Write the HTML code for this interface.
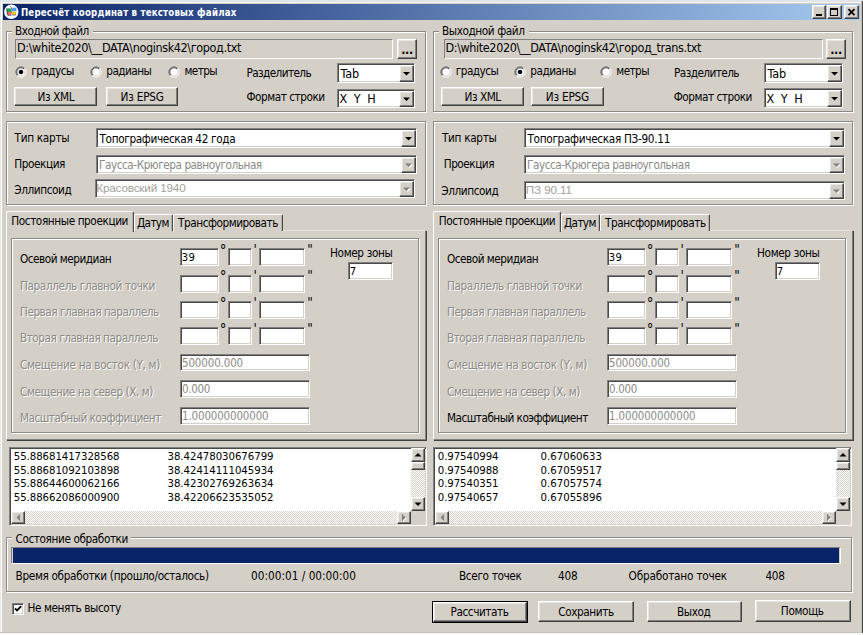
<!DOCTYPE html>
<html lang="ru"><head><meta charset="utf-8"><title>Пересчёт координат в текстовых файлах</title>
<style>
html,body{margin:0;padding:0}
body{width:863px;height:635px;background:#d4d0c8;position:relative;overflow:hidden;font-family:"DejaVu Sans Condensed","Liberation Sans",sans-serif;font-size:11.7px;color:#000}
.a,.t,.grp,.ed,.ed1,.btn,.page,.tab,.trk,svg.a{position:absolute;box-sizing:border-box}
.t{white-space:pre;display:block}
.lib{font-family:"Liberation Sans",sans-serif}
.grp{box-sizing:content-box;border:1px solid #8c8a85;box-shadow:1px 1px 0 #fff, inset 1px 1px 0 #fff}
.ed{border:1px solid;border-color:#808080 #fff #fff #808080;box-shadow:inset 1px 1px 0 #4a4a4a, inset -1px -1px 0 #d4d0c8}
.ed1{border:1px solid;border-color:#808080 #fff #fff #808080;background-clip:content-box !important;padding:1px}
.btn{background:#d4d0c8;border:1px solid;border-color:#fff #404040 #404040 #fff;box-shadow:inset -1px -1px 0 #808080, inset 1px 1px 0 #e8e6e0}
.page{box-sizing:content-box;border:1px solid;border-color:#e6e4de #808080 #808080 #fff;box-shadow:1px 1px 0 #404040;background:#d4d0c8}
.tab{box-sizing:content-box;background:#d4d0c8;border:1px solid;border-color:#fff #4a4a4a transparent #fff;border-bottom:none;border-radius:2px 2px 0 0;box-shadow:inset -1px 0 0 #b4b1aa}
.tab.sel{}
.trk{background:#e9e7e3 repeating-conic-gradient(#ffffff 0% 25%, #d4d0c8 0% 50%) 0 0/2px 2px}
</style></head>
<body>
<div class="a" style="left:0;top:0;width:863px;height:1px;background:#dde6f1"></div>
<div class="a" style="left:0;top:1px;width:2px;height:634px;background:#e9e7e2"></div>
<div class="a" style="left:0;top:1px;width:863px;height:1px;background:#e4e2dc"></div>
<div class="a" style="left:1px;top:2px;width:860px;height:1px;background:#f6f5f2"></div>
<div class="a" style="left:1px;top:2px;width:1px;height:630px;background:#fff"></div>
<div class="a" style="left:0;top:633px;width:863px;height:2px;background:#f3f6fb"></div>
<div class="a" style="left:0;top:632px;width:863px;height:1px;background:#c6c2bb"></div>
<div class="a" style="left:861px;top:1px;width:1px;height:632px;background:#c4c1ba"></div>
<div class="a" style="left:862px;top:1px;width:1px;height:632px;background:#45433f"></div>
<div class="a" style="left:3px;top:4px;width:857px;height:16px;background:linear-gradient(90deg,#0a246a 0%,#a6caf0 100%)"></div>
<svg class="a" style="left:4px;top:4px" width="16" height="16" viewBox="0 0 16 16"><circle cx="7.3" cy="7.8" r="7.2" fill="#fff"/><path d="M2.7 4.6 Q5 3.9 7.7 4.7 L7.7 8.1 Q5 7.6 2.9 8.3 Z" fill="#21a355"/><path d="M8 4.6 Q9.4 3 10.6 3.6 Q11.6 3.4 12.4 4.6 L12.5 7.3 Q10.3 6.9 8 7.5 Z" fill="#4d9cf5"/><path d="M2.9 8.3 Q5 7.6 7.7 8.1 L7.7 10.6 Q5.4 10.6 3.6 11.2 Z" fill="#f0605e"/><path d="M8 7.8 Q10.3 7.2 12.4 7.6 L12 10.4 Q10 10.7 8 10.3 Z" fill="#fbc312"/><path d="M6.2 2.2 Q7.6 3.4 7.8 5 M2.6 4.4 L3 8 L3.8 11.4 M4 11.6 Q5.6 11.2 7.6 11.2 M8 10.8 Q10 11.2 12 10.8" fill="none" stroke="#2a2a2a" stroke-width="0.8" opacity="0.85"/></svg>
<span id="t1" class="t" style="left:20.90px;top:7px;font-size:9.6px;line-height:11px;color:#fff;font-weight:bold;letter-spacing:0.207px;">Пересчёт координат в текстовых файлах</span>
<div class="btn" style="left:812px;top:5px;width:14px;height:14px;"></div>
<div class="btn" style="left:827px;top:5px;width:15px;height:14px;"></div>
<div class="btn" style="left:844px;top:5px;width:15px;height:14px;"></div>
<svg class="a" style="left:0;top:0" width="863" height="635"><rect x="816" y="14" width="6" height="2" fill="#000"/><rect x="830.5" y="8.5" width="7" height="7" fill="none" stroke="#000" stroke-width="1"/><rect x="830" y="8" width="8" height="2" fill="#000"/><path d="M848.5 9.2 L854.5 15.2 M854.5 9.2 L848.5 15.2" stroke="#000" stroke-width="1.7" fill="none"/></svg>
<div class="grp" style="left:6px;top:31px;width:418px;height:79px"></div>
<div class="a" style="left:12px;top:26px;width:80.75px;height:10px;background:#d4d0c8"></div>
<span id="t2" class="t" style="left:15.00px;top:24px;font-size:11.7px;line-height:14px;letter-spacing:-0.488px;">Входной файл</span>
<div class="ed1" style="left:15px;top:39px;width:378px;height:20px;"></div>
<span id="t3" class="t" style="left:17.00px;top:40px;font-size:12.5px;line-height:15px;letter-spacing:-0.377px;">D:\white2020\__DATA\noginsk42\город.txt</span>
<div class="btn" style="left:397px;top:39px;width:20px;height:20px;"></div>
<span id="t4" class="t" style="left:401.20px;top:42px;font-size:12.5px;line-height:15px;font-weight:bold;letter-spacing:-0.343px;">...</span>
<svg class="a" style="left:15px;top:65.8px" width="12" height="12"><circle cx="6" cy="6" r="4.6" fill="#fff"/><path d="M2.3 9.7 A5.2 5.2 0 0 1 9.7 2.3" fill="none" stroke="#808080" stroke-width="1"/><path d="M3 9 A4.2 4.2 0 0 1 9 3" fill="none" stroke="#404040" stroke-width="1"/><path d="M9.7 2.3 A5.2 5.2 0 0 1 2.3 9.7" fill="none" stroke="#fff" stroke-width="1"/><path d="M9 3 A4.2 4.2 0 0 1 3 9" fill="none" stroke="#d4d0c8" stroke-width="1"/><circle cx="6" cy="6" r="2.3" fill="#000"/></svg>
<span id="t5" class="t" style="left:31.25px;top:64px;font-size:11.7px;line-height:14px;letter-spacing:-0.533px;">градусы</span>
<svg class="a" style="left:89.75px;top:65.8px" width="12" height="12"><circle cx="6" cy="6" r="4.6" fill="#fff"/><path d="M2.3 9.7 A5.2 5.2 0 0 1 9.7 2.3" fill="none" stroke="#808080" stroke-width="1"/><path d="M3 9 A4.2 4.2 0 0 1 9 3" fill="none" stroke="#404040" stroke-width="1"/><path d="M9.7 2.3 A5.2 5.2 0 0 1 2.3 9.7" fill="none" stroke="#fff" stroke-width="1"/><path d="M9 3 A4.2 4.2 0 0 1 3 9" fill="none" stroke="#d4d0c8" stroke-width="1"/></svg>
<span id="t6" class="t" style="left:106.25px;top:64px;font-size:11.7px;line-height:14px;letter-spacing:-0.551px;">радианы</span>
<svg class="a" style="left:168.25px;top:65.8px" width="12" height="12"><circle cx="6" cy="6" r="4.6" fill="#fff"/><path d="M2.3 9.7 A5.2 5.2 0 0 1 9.7 2.3" fill="none" stroke="#808080" stroke-width="1"/><path d="M3 9 A4.2 4.2 0 0 1 9 3" fill="none" stroke="#404040" stroke-width="1"/><path d="M9.7 2.3 A5.2 5.2 0 0 1 2.3 9.7" fill="none" stroke="#fff" stroke-width="1"/><path d="M9 3 A4.2 4.2 0 0 1 3 9" fill="none" stroke="#d4d0c8" stroke-width="1"/></svg>
<span id="t7" class="t" style="left:184.50px;top:64px;font-size:11.7px;line-height:14px;letter-spacing:-0.603px;">метры</span>
<span id="t8" class="t" style="left:246.50px;top:66px;font-size:11.7px;line-height:14px;letter-spacing:-0.608px;">Разделитель</span>
<div class="ed" style="left:337px;top:63px;width:78px;height:20px;background:#fff;"></div>
<div class="btn" style="left:399px;top:65px;width:15px;height:17px;"></div>
<svg class="a" style="left:0;top:0" width="863" height="635"><polygon points="403.0,72.0 410.0,72.0 406.5,75.5" fill="#000"/></svg>
<span id="t9" class="t" style="left:340.50px;top:66px;font-size:12.5px;line-height:15px;letter-spacing:-0.115px;">Tab</span>
<div class="btn" style="left:14px;top:87px;width:83px;height:19px;"></div>
<span id="t10" class="t" style="left:37.50px;top:90px;font-size:11.7px;line-height:14px;letter-spacing:-0.365px;">Из XML</span>
<div class="btn" style="left:106px;top:87px;width:72px;height:19px;"></div>
<span id="t11" class="t" style="left:120.50px;top:90px;font-size:11.7px;line-height:14px;letter-spacing:-0.194px;">Из EPSG</span>
<span id="t12" class="t" style="left:246.50px;top:90px;font-size:11.7px;line-height:14px;letter-spacing:-0.458px;">Формат строки</span>
<div class="ed" style="left:337px;top:89px;width:78px;height:19px;background:#fff;"></div>
<div class="btn" style="left:399px;top:91px;width:15px;height:16px;"></div>
<svg class="a" style="left:0;top:0" width="863" height="635"><polygon points="403.0,97.5 410.0,97.5 406.5,101.0" fill="#000"/></svg>
<span id="t13" class="t" style="left:339.50px;top:91px;font-size:12.5px;line-height:15px;letter-spacing:-0.188px;">X  Y  H</span>
<div class="grp" style="left:6px;top:121px;width:418px;height:82px"></div>
<span id="t14" class="t" style="left:14.50px;top:131px;font-size:11.7px;line-height:14px;letter-spacing:-0.292px;">Тип карты</span>
<div class="ed" style="left:96px;top:128px;width:321px;height:20px;background:#fff;"></div>
<div class="btn" style="left:401px;top:130px;width:15px;height:17px;"></div>
<svg class="a" style="left:0;top:0" width="863" height="635"><polygon points="405.0,137.0 412.0,137.0 408.5,140.5" fill="#000"/></svg>
<span id="t15" class="t" style="left:99.50px;top:132px;font-size:11.7px;line-height:14px;letter-spacing:-0.356px;">Топографическая 42 года</span>
<span id="t16" class="t" style="left:14.25px;top:157px;font-size:11.7px;line-height:14px;letter-spacing:-0.426px;">Проекция</span>
<div class="ed" style="left:96px;top:155px;width:321px;height:19px;background:#fff;"></div>
<div class="btn" style="left:401px;top:157px;width:15px;height:16px;"></div>
<svg class="a" style="left:0;top:0" width="863" height="635"><polygon points="406.0,164.5 413.0,164.5 409.5,168.0" fill="#fff"/><polygon points="405.0,163.5 412.0,163.5 408.5,167.0" fill="#808080"/></svg>
<span id="t17" class="t" style="left:99.00px;top:158px;font-size:11.7px;line-height:14px;color:#8c8a86;letter-spacing:-0.463px;">Гаусса-Крюгера равноугольная</span>
<span id="t18" class="t" style="left:14.25px;top:183px;font-size:11.7px;line-height:14px;letter-spacing:-0.424px;">Эллипсоид</span>
<div class="ed" style="left:95px;top:179px;width:320px;height:19px;background:#fff;"></div>
<div class="btn" style="left:399px;top:181px;width:15px;height:16px;"></div>
<svg class="a" style="left:0;top:0" width="863" height="635"><polygon points="404.0,188.5 411.0,188.5 407.5,192.0" fill="#fff"/><polygon points="403.0,187.5 410.0,187.5 406.5,191.0" fill="#808080"/></svg>
<span id="t19" class="t lib" style="left:96.25px;top:181px;font-size:11.7px;line-height:13px;color:#a3a19c;letter-spacing:-0.158px;">Красовский 1940</span>
<div class="page" style="left:6px;top:230px;width:418px;height:208px"></div>
<div class="tab" style="left:134px;top:214px;width:37px;height:16px"></div>
<span id="t20" class="t" style="left:137.00px;top:216px;font-size:11.7px;line-height:14px;letter-spacing:-0.637px;">Датум</span>
<div class="tab" style="left:173px;top:214px;width:108px;height:16px"></div>
<span id="t21" class="t" style="left:178.00px;top:216px;font-size:11.7px;line-height:14px;letter-spacing:-0.446px;">Трансформировать</span>
<div class="tab sel" style="left:6px;top:211px;width:126px;height:20px"></div>
<span id="t22" class="t" style="left:11.25px;top:214px;font-size:11.7px;line-height:14px;letter-spacing:-0.408px;">Постоянные проекции</span>
<div class="grp" style="left:11px;top:238px;width:406px;height:193px"></div>
<span id="t23" class="t" style="left:20.00px;top:252px;font-size:11.7px;line-height:14px;letter-spacing:-0.495px;">Осевой меридиан</span>
<div class="ed" style="left:180px;top:248px;width:38.5px;height:18px;background:#fff;"></div>
<div class="ed" style="left:228px;top:248px;width:23.5px;height:18px;background:#fff;"></div>
<div class="ed" style="left:259px;top:248px;width:46px;height:18px;background:#fff;"></div>
<span id="t24" class="t" style="left:219.80px;top:242px;font-size:15px;line-height:18px;">°</span>
<span id="t25" class="t" style="left:253.60px;top:241px;font-size:13.5px;line-height:16px;">&#x27;</span>
<span id="t26" class="t" style="left:307.30px;top:241px;font-size:13.5px;line-height:16px;">&quot;</span>
<span id="t27" class="t" style="left:20.00px;top:279px;font-size:11.7px;line-height:14px;color:#8c8a86;text-shadow:1px 1px 0 #fff;letter-spacing:-0.390px;">Параллель главной точки</span>
<div class="ed" style="left:180px;top:274.5px;width:38.5px;height:18.0px;background:#fff;"></div>
<div class="ed" style="left:228px;top:274.5px;width:23.5px;height:18.0px;background:#fff;"></div>
<div class="ed" style="left:259px;top:274.5px;width:46px;height:18.0px;background:#fff;"></div>
<span id="t28" class="t" style="left:219.80px;top:268px;font-size:15px;line-height:18px;">°</span>
<span id="t29" class="t" style="left:253.60px;top:267px;font-size:13.5px;line-height:16px;">&#x27;</span>
<span id="t30" class="t" style="left:307.30px;top:267px;font-size:13.5px;line-height:16px;">&quot;</span>
<span id="t31" class="t" style="left:20.00px;top:305px;font-size:11.7px;line-height:14px;color:#8c8a86;text-shadow:1px 1px 0 #fff;letter-spacing:-0.490px;">Первая главная параллель</span>
<div class="ed" style="left:180px;top:301px;width:38.5px;height:18px;background:#fff;"></div>
<div class="ed" style="left:228px;top:301px;width:23.5px;height:18px;background:#fff;"></div>
<div class="ed" style="left:259px;top:301px;width:46px;height:18px;background:#fff;"></div>
<span id="t32" class="t" style="left:219.80px;top:295px;font-size:15px;line-height:18px;">°</span>
<span id="t33" class="t" style="left:253.60px;top:294px;font-size:13.5px;line-height:16px;">&#x27;</span>
<span id="t34" class="t" style="left:307.30px;top:294px;font-size:13.5px;line-height:16px;">&quot;</span>
<span id="t35" class="t" style="left:20.00px;top:331px;font-size:11.7px;line-height:14px;color:#8c8a86;text-shadow:1px 1px 0 #fff;letter-spacing:-0.488px;">Вторая главная параллель</span>
<div class="ed" style="left:180px;top:327px;width:38.5px;height:18px;background:#fff;"></div>
<div class="ed" style="left:228px;top:327px;width:23.5px;height:18px;background:#fff;"></div>
<div class="ed" style="left:259px;top:327px;width:46px;height:18px;background:#fff;"></div>
<span id="t36" class="t" style="left:219.80px;top:321px;font-size:15px;line-height:18px;">°</span>
<span id="t37" class="t" style="left:253.60px;top:320px;font-size:13.5px;line-height:16px;">&#x27;</span>
<span id="t38" class="t" style="left:307.30px;top:320px;font-size:13.5px;line-height:16px;">&quot;</span>
<span id="t39" class="t" style="left:181.80px;top:251px;font-size:11.2px;line-height:13px;letter-spacing:0.194px;">39</span>
<span id="t40" class="t" style="left:20.00px;top:358px;font-size:11.7px;line-height:14px;color:#8c8a86;text-shadow:1px 1px 0 #fff;letter-spacing:-0.328px;">Смещение на восток (Y, м)</span>
<div class="ed" style="left:180px;top:354px;width:130px;height:17px;background:#fff;"></div>
<span id="t41" class="t" style="left:182.00px;top:356px;font-size:11.4px;line-height:14px;color:#8c8a86;letter-spacing:-0.092px;">500000.000</span>
<span id="t42" class="t" style="left:20.00px;top:385px;font-size:11.7px;line-height:14px;color:#8c8a86;text-shadow:1px 1px 0 #fff;letter-spacing:-0.428px;">Смещение на север (X, м)</span>
<div class="ed" style="left:180px;top:380px;width:130px;height:18px;background:#fff;"></div>
<span id="t43" class="t" style="left:182.00px;top:382px;font-size:11.4px;line-height:14px;color:#8c8a86;letter-spacing:-0.266px;">0.000</span>
<span id="t44" class="t" style="left:20.00px;top:411px;font-size:11.7px;line-height:14px;color:#8c8a86;text-shadow:1px 1px 0 #fff;letter-spacing:-0.518px;">Масштабный коэффициент</span>
<div class="ed" style="left:180px;top:407px;width:130px;height:18px;background:#fff;"></div>
<span id="t45" class="t" style="left:182.00px;top:409px;font-size:11.4px;line-height:14px;color:#8c8a86;letter-spacing:-0.107px;">1.000000000000</span>
<span id="t46" class="t" style="left:330.00px;top:246px;font-size:11.7px;line-height:14px;letter-spacing:-0.347px;">Номер зоны</span>
<div class="ed" style="left:347.5px;top:262px;width:45.0px;height:18px;background:#fff;"></div>
<span id="t47" class="t" style="left:349.70px;top:265px;font-size:11.2px;line-height:13px;">7</span>
<div class="grp" style="left:433px;top:31px;width:418px;height:79px"></div>
<div class="a" style="left:439px;top:26px;width:89.5px;height:10px;background:#d4d0c8"></div>
<span id="t48" class="t" style="left:442.00px;top:24px;font-size:11.7px;line-height:14px;letter-spacing:-0.416px;">Выходной файл</span>
<div class="ed1" style="left:443.5px;top:39px;width:379.0px;height:20px;"></div>
<span id="t49" class="t" style="left:445.50px;top:40px;font-size:12.5px;line-height:15px;letter-spacing:-0.394px;">D:\white2020\__DATA\noginsk42\город_trans.txt</span>
<div class="btn" style="left:826px;top:39px;width:20px;height:20px;"></div>
<span id="t50" class="t" style="left:830.20px;top:42px;font-size:12.5px;line-height:15px;font-weight:bold;letter-spacing:-0.343px;">...</span>
<svg class="a" style="left:439.75px;top:65.8px" width="12" height="12"><circle cx="6" cy="6" r="4.6" fill="#fff"/><path d="M2.3 9.7 A5.2 5.2 0 0 1 9.7 2.3" fill="none" stroke="#808080" stroke-width="1"/><path d="M3 9 A4.2 4.2 0 0 1 9 3" fill="none" stroke="#404040" stroke-width="1"/><path d="M9.7 2.3 A5.2 5.2 0 0 1 2.3 9.7" fill="none" stroke="#fff" stroke-width="1"/><path d="M9 3 A4.2 4.2 0 0 1 3 9" fill="none" stroke="#d4d0c8" stroke-width="1"/></svg>
<span id="t51" class="t" style="left:455.75px;top:64px;font-size:11.7px;line-height:14px;letter-spacing:-0.533px;">градусы</span>
<svg class="a" style="left:514.25px;top:65.8px" width="12" height="12"><circle cx="6" cy="6" r="4.6" fill="#fff"/><path d="M2.3 9.7 A5.2 5.2 0 0 1 9.7 2.3" fill="none" stroke="#808080" stroke-width="1"/><path d="M3 9 A4.2 4.2 0 0 1 9 3" fill="none" stroke="#404040" stroke-width="1"/><path d="M9.7 2.3 A5.2 5.2 0 0 1 2.3 9.7" fill="none" stroke="#fff" stroke-width="1"/><path d="M9 3 A4.2 4.2 0 0 1 3 9" fill="none" stroke="#d4d0c8" stroke-width="1"/><circle cx="6" cy="6" r="2.3" fill="#000"/></svg>
<span id="t52" class="t" style="left:530.25px;top:64px;font-size:11.7px;line-height:14px;letter-spacing:-0.480px;">радианы</span>
<svg class="a" style="left:599.75px;top:65.8px" width="12" height="12"><circle cx="6" cy="6" r="4.6" fill="#fff"/><path d="M2.3 9.7 A5.2 5.2 0 0 1 9.7 2.3" fill="none" stroke="#808080" stroke-width="1"/><path d="M3 9 A4.2 4.2 0 0 1 9 3" fill="none" stroke="#404040" stroke-width="1"/><path d="M9.7 2.3 A5.2 5.2 0 0 1 2.3 9.7" fill="none" stroke="#fff" stroke-width="1"/><path d="M9 3 A4.2 4.2 0 0 1 3 9" fill="none" stroke="#d4d0c8" stroke-width="1"/></svg>
<span id="t53" class="t" style="left:616.25px;top:64px;font-size:11.7px;line-height:14px;letter-spacing:-0.553px;">метры</span>
<span id="t54" class="t" style="left:674.00px;top:66px;font-size:11.7px;line-height:14px;letter-spacing:-0.562px;">Разделитель</span>
<div class="ed" style="left:764px;top:63px;width:79px;height:20px;background:#fff;"></div>
<div class="btn" style="left:827px;top:65px;width:15px;height:17px;"></div>
<svg class="a" style="left:0;top:0" width="863" height="635"><polygon points="831.0,72.0 838.0,72.0 834.5,75.5" fill="#000"/></svg>
<span id="t55" class="t" style="left:767.50px;top:66px;font-size:12.5px;line-height:15px;letter-spacing:-0.115px;">Tab</span>
<div class="btn" style="left:441px;top:87px;width:83px;height:19px;"></div>
<span id="t56" class="t" style="left:464.50px;top:90px;font-size:11.7px;line-height:14px;letter-spacing:-0.448px;">Из XML</span>
<div class="btn" style="left:531px;top:87px;width:73px;height:19px;"></div>
<span id="t57" class="t" style="left:545.75px;top:90px;font-size:11.7px;line-height:14px;letter-spacing:-0.194px;">Из EPSG</span>
<span id="t58" class="t" style="left:673.70px;top:90px;font-size:11.7px;line-height:14px;letter-spacing:-0.454px;">Формат строки</span>
<div class="ed" style="left:764px;top:88px;width:79px;height:20px;background:#fff;"></div>
<div class="btn" style="left:827px;top:90px;width:15px;height:17px;"></div>
<svg class="a" style="left:0;top:0" width="863" height="635"><polygon points="831.0,97.0 838.0,97.0 834.5,100.5" fill="#000"/></svg>
<span id="t59" class="t" style="left:766.50px;top:91px;font-size:12.5px;line-height:15px;letter-spacing:-0.188px;">X  Y  H</span>
<div class="grp" style="left:433px;top:121px;width:418px;height:82px"></div>
<span id="t60" class="t" style="left:442.00px;top:131px;font-size:11.7px;line-height:14px;letter-spacing:-0.319px;">Тип карты</span>
<div class="ed" style="left:524px;top:128px;width:321px;height:20px;background:#fff;"></div>
<div class="btn" style="left:829px;top:130px;width:15px;height:17px;"></div>
<svg class="a" style="left:0;top:0" width="863" height="635"><polygon points="833.0,137.0 840.0,137.0 836.5,140.5" fill="#000"/></svg>
<span id="t61" class="t" style="left:527.50px;top:132px;font-size:11.7px;line-height:14px;letter-spacing:-0.316px;">Топографическая ПЗ-90.11</span>
<span id="t62" class="t" style="left:443.75px;top:157px;font-size:11.7px;line-height:14px;letter-spacing:-0.488px;">Проекция</span>
<div class="ed" style="left:524px;top:155px;width:321px;height:19px;background:#fff;"></div>
<div class="btn" style="left:829px;top:157px;width:15px;height:16px;"></div>
<svg class="a" style="left:0;top:0" width="863" height="635"><polygon points="834.0,164.5 841.0,164.5 837.5,168.0" fill="#fff"/><polygon points="833.0,163.5 840.0,163.5 836.5,167.0" fill="#808080"/></svg>
<span id="t63" class="t" style="left:527.00px;top:158px;font-size:11.7px;line-height:14px;color:#8c8a86;letter-spacing:-0.468px;">Гаусса-Крюгера равноугольная</span>
<span id="t64" class="t" style="left:441.25px;top:184px;font-size:11.7px;line-height:14px;letter-spacing:-0.424px;">Эллипсоид</span>
<div class="ed" style="left:524px;top:181px;width:321px;height:19px;background:#fff;"></div>
<div class="btn" style="left:829px;top:183px;width:15px;height:16px;"></div>
<svg class="a" style="left:0;top:0" width="863" height="635"><polygon points="834.0,190.5 841.0,190.5 837.5,194.0" fill="#fff"/><polygon points="833.0,189.5 840.0,189.5 836.5,193.0" fill="#808080"/></svg>
<span id="t65" class="t lib" style="left:525.75px;top:183px;font-size:11.7px;line-height:13px;color:#a3a19c;letter-spacing:-0.105px;">ПЗ 90.11</span>
<div class="page" style="left:433px;top:230px;width:418px;height:208px"></div>
<div class="tab" style="left:561px;top:214px;width:37px;height:16px"></div>
<span id="t66" class="t" style="left:564.00px;top:216px;font-size:11.7px;line-height:14px;letter-spacing:-0.637px;">Датум</span>
<div class="tab" style="left:600px;top:214px;width:108px;height:16px"></div>
<span id="t67" class="t" style="left:605.00px;top:216px;font-size:11.7px;line-height:14px;letter-spacing:-0.396px;">Трансформировать</span>
<div class="tab sel" style="left:433px;top:211px;width:126px;height:20px"></div>
<span id="t68" class="t" style="left:438.75px;top:214px;font-size:11.7px;line-height:14px;letter-spacing:-0.421px;">Постоянные проекции</span>
<div class="grp" style="left:438px;top:238px;width:406px;height:193px"></div>
<span id="t69" class="t" style="left:447.00px;top:252px;font-size:11.7px;line-height:14px;letter-spacing:-0.495px;">Осевой меридиан</span>
<div class="ed" style="left:607px;top:248px;width:38.5px;height:18px;background:#fff;"></div>
<div class="ed" style="left:655px;top:248px;width:23.5px;height:18px;background:#fff;"></div>
<div class="ed" style="left:686px;top:248px;width:46px;height:18px;background:#fff;"></div>
<span id="t70" class="t" style="left:646.80px;top:242px;font-size:15px;line-height:18px;">°</span>
<span id="t71" class="t" style="left:680.60px;top:241px;font-size:13.5px;line-height:16px;">&#x27;</span>
<span id="t72" class="t" style="left:734.30px;top:241px;font-size:13.5px;line-height:16px;">&quot;</span>
<span id="t73" class="t" style="left:447.00px;top:279px;font-size:11.7px;line-height:14px;color:#8c8a86;text-shadow:1px 1px 0 #fff;letter-spacing:-0.390px;">Параллель главной точки</span>
<div class="ed" style="left:607px;top:274.5px;width:38.5px;height:18.0px;background:#fff;"></div>
<div class="ed" style="left:655px;top:274.5px;width:23.5px;height:18.0px;background:#fff;"></div>
<div class="ed" style="left:686px;top:274.5px;width:46px;height:18.0px;background:#fff;"></div>
<span id="t74" class="t" style="left:646.80px;top:268px;font-size:15px;line-height:18px;">°</span>
<span id="t75" class="t" style="left:680.60px;top:267px;font-size:13.5px;line-height:16px;">&#x27;</span>
<span id="t76" class="t" style="left:734.30px;top:267px;font-size:13.5px;line-height:16px;">&quot;</span>
<span id="t77" class="t" style="left:447.00px;top:305px;font-size:11.7px;line-height:14px;color:#8c8a86;text-shadow:1px 1px 0 #fff;letter-spacing:-0.490px;">Первая главная параллель</span>
<div class="ed" style="left:607px;top:301px;width:38.5px;height:18px;background:#fff;"></div>
<div class="ed" style="left:655px;top:301px;width:23.5px;height:18px;background:#fff;"></div>
<div class="ed" style="left:686px;top:301px;width:46px;height:18px;background:#fff;"></div>
<span id="t78" class="t" style="left:646.80px;top:295px;font-size:15px;line-height:18px;">°</span>
<span id="t79" class="t" style="left:680.60px;top:294px;font-size:13.5px;line-height:16px;">&#x27;</span>
<span id="t80" class="t" style="left:734.30px;top:294px;font-size:13.5px;line-height:16px;">&quot;</span>
<span id="t81" class="t" style="left:447.00px;top:331px;font-size:11.7px;line-height:14px;color:#8c8a86;text-shadow:1px 1px 0 #fff;letter-spacing:-0.488px;">Вторая главная параллель</span>
<div class="ed" style="left:607px;top:327px;width:38.5px;height:18px;background:#fff;"></div>
<div class="ed" style="left:655px;top:327px;width:23.5px;height:18px;background:#fff;"></div>
<div class="ed" style="left:686px;top:327px;width:46px;height:18px;background:#fff;"></div>
<span id="t82" class="t" style="left:646.80px;top:321px;font-size:15px;line-height:18px;">°</span>
<span id="t83" class="t" style="left:680.60px;top:320px;font-size:13.5px;line-height:16px;">&#x27;</span>
<span id="t84" class="t" style="left:734.30px;top:320px;font-size:13.5px;line-height:16px;">&quot;</span>
<span id="t85" class="t" style="left:608.80px;top:251px;font-size:11.2px;line-height:13px;letter-spacing:0.194px;">39</span>
<span id="t86" class="t" style="left:447.00px;top:358px;font-size:11.7px;line-height:14px;color:#8c8a86;text-shadow:1px 1px 0 #fff;letter-spacing:-0.328px;">Смещение на восток (Y, м)</span>
<div class="ed" style="left:607px;top:354px;width:130px;height:17px;background:#fff;"></div>
<span id="t87" class="t" style="left:609.00px;top:356px;font-size:11.4px;line-height:14px;color:#8c8a86;letter-spacing:-0.092px;">500000.000</span>
<span id="t88" class="t" style="left:447.00px;top:385px;font-size:11.7px;line-height:14px;color:#8c8a86;text-shadow:1px 1px 0 #fff;letter-spacing:-0.428px;">Смещение на север (X, м)</span>
<div class="ed" style="left:607px;top:380px;width:130px;height:18px;background:#fff;"></div>
<span id="t89" class="t" style="left:609.00px;top:382px;font-size:11.4px;line-height:14px;color:#8c8a86;letter-spacing:-0.266px;">0.000</span>
<span id="t90" class="t" style="left:447.00px;top:411px;font-size:11.7px;line-height:14px;letter-spacing:-0.518px;">Масштабный коэффициент</span>
<div class="ed" style="left:607px;top:407px;width:130px;height:18px;background:#fff;"></div>
<span id="t91" class="t" style="left:609.00px;top:409px;font-size:11.4px;line-height:14px;color:#8c8a86;letter-spacing:-0.107px;">1.000000000000</span>
<span id="t92" class="t" style="left:757.00px;top:246px;font-size:11.7px;line-height:14px;letter-spacing:-0.347px;">Номер зоны</span>
<div class="ed" style="left:774.5px;top:262px;width:45.0px;height:18px;background:#fff;"></div>
<span id="t93" class="t" style="left:776.70px;top:265px;font-size:11.2px;line-height:13px;">7</span>
<div class="ed" style="left:9px;top:447px;width:418px;height:79px;background:#fff;"></div>
<div class="trk" style="left:411px;top:448px;width:14px;height:63px"></div>
<div class="trk" style="left:11px;top:511px;width:400px;height:13px"></div>
<div class="a" style="left:411px;top:511px;width:14px;height:13px;background:#d4d0c8"></div>
<div class="btn" style="left:411px;top:448px;width:14px;height:13.5px;"></div>
<div class="btn" style="left:411px;top:461.5px;width:14px;height:8.0px;"></div>
<div class="btn" style="left:411px;top:497px;width:14px;height:14px;"></div>
<div class="btn" style="left:11px;top:511px;width:14px;height:13px;"></div>
<div class="btn" style="left:397px;top:511px;width:14px;height:13px;"></div>
<svg class="a" style="left:0;top:0" width="863" height="635"><polygon points="414.5,456.5 421.5,456.5 418.0,453" fill="#000"/><polygon points="414.5,502.5 421.5,502.5 418.0,506" fill="#000"/><polygon points="20,514 20,521 16.5,517.5" fill="#808080"/><polygon points="402,514 402,521 405.5,517.5" fill="#808080"/><polygon points="403,515 403,522 406.5,518.5" fill="#fff" opacity="0.8"/><polygon points="402,514 402,521 405.5,517.5" fill="#808080"/></svg>
<span id="t94" class="t" style="left:13.75px;top:450px;font-size:11.3px;line-height:13px;letter-spacing:-0.054px;">55.88681417328568</span>
<span id="t95" class="t" style="left:167.50px;top:450px;font-size:11.3px;line-height:13px;letter-spacing:-0.040px;">38.42478030676799</span>
<span id="t96" class="t" style="left:13.75px;top:464px;font-size:11.3px;line-height:13px;letter-spacing:-0.054px;">55.88681092103898</span>
<span id="t97" class="t" style="left:167.50px;top:464px;font-size:11.3px;line-height:13px;letter-spacing:-0.040px;">38.42414111045934</span>
<span id="t98" class="t" style="left:13.75px;top:477px;font-size:11.3px;line-height:13px;letter-spacing:-0.054px;">55.88644600062166</span>
<span id="t99" class="t" style="left:167.50px;top:477px;font-size:11.3px;line-height:13px;letter-spacing:-0.040px;">38.42302769263634</span>
<span id="t100" class="t" style="left:13.75px;top:491px;font-size:11.3px;line-height:13px;letter-spacing:-0.054px;">55.88662086000900</span>
<span id="t101" class="t" style="left:167.50px;top:491px;font-size:11.3px;line-height:13px;letter-spacing:-0.040px;">38.42206623535052</span>
<div class="ed" style="left:433px;top:447px;width:419px;height:79px;background:#fff;"></div>
<div class="trk" style="left:836px;top:448px;width:14px;height:63px"></div>
<div class="trk" style="left:435px;top:511px;width:401px;height:13px"></div>
<div class="a" style="left:836px;top:511px;width:14px;height:13px;background:#d4d0c8"></div>
<div class="btn" style="left:836px;top:448px;width:14px;height:13.5px;"></div>
<div class="btn" style="left:836px;top:461.5px;width:14px;height:8.0px;"></div>
<div class="btn" style="left:836px;top:497px;width:14px;height:14px;"></div>
<div class="btn" style="left:435px;top:511px;width:14px;height:13px;"></div>
<div class="btn" style="left:822px;top:511px;width:14px;height:13px;"></div>
<svg class="a" style="left:0;top:0" width="863" height="635"><polygon points="839.5,456.5 846.5,456.5 843.0,453" fill="#000"/><polygon points="839.5,502.5 846.5,502.5 843.0,506" fill="#000"/><polygon points="444,514 444,521 440.5,517.5" fill="#808080"/><polygon points="827,514 827,521 830.5,517.5" fill="#808080"/><polygon points="828,515 828,522 831.5,518.5" fill="#fff" opacity="0.8"/><polygon points="827,514 827,521 830.5,517.5" fill="#808080"/></svg>
<span id="t102" class="t" style="left:437.75px;top:450px;font-size:11.3px;line-height:13px;letter-spacing:-0.067px;">0.97540994</span>
<span id="t103" class="t" style="left:540.50px;top:450px;font-size:11.3px;line-height:13px;letter-spacing:0.008px;">0.67060633</span>
<span id="t104" class="t" style="left:437.75px;top:464px;font-size:11.3px;line-height:13px;letter-spacing:-0.067px;">0.97540988</span>
<span id="t105" class="t" style="left:540.50px;top:464px;font-size:11.3px;line-height:13px;letter-spacing:0.008px;">0.67059517</span>
<span id="t106" class="t" style="left:437.75px;top:477px;font-size:11.3px;line-height:13px;letter-spacing:-0.067px;">0.97540351</span>
<span id="t107" class="t" style="left:540.50px;top:477px;font-size:11.3px;line-height:13px;letter-spacing:0.008px;">0.67057574</span>
<span id="t108" class="t" style="left:437.75px;top:491px;font-size:11.3px;line-height:13px;letter-spacing:-0.067px;">0.97540657</span>
<span id="t109" class="t" style="left:540.50px;top:491px;font-size:11.3px;line-height:13px;letter-spacing:0.008px;">0.67055896</span>
<div class="grp" style="left:6px;top:537px;width:844px;height:53px"></div>
<div class="a" style="left:12px;top:533px;width:119px;height:10px;background:#d4d0c8"></div>
<span id="t110" class="t" style="left:15.50px;top:532px;font-size:11.7px;line-height:14px;letter-spacing:-0.406px;">Состояние обработки</span>
<div class="ed1" style="left:11px;top:547px;width:830px;height:17px;background:#0a246a;padding:0 1px;"></div>
<span id="t111" class="t" style="left:15.50px;top:569px;font-size:11.7px;line-height:14px;letter-spacing:-0.325px;">Время обработки (прошло/осталось)</span>
<span id="t112" class="t" style="left:251.00px;top:569px;font-size:11.7px;line-height:14px;letter-spacing:0.017px;">00:00:01 / 00:00:00</span>
<span id="t113" class="t" style="left:459.00px;top:569px;font-size:11.7px;line-height:14px;letter-spacing:-0.351px;">Всего точек</span>
<span id="t114" class="t" style="left:558.00px;top:569px;font-size:11.7px;line-height:14px;letter-spacing:-0.126px;">408</span>
<span id="t115" class="t" style="left:628.60px;top:569px;font-size:11.7px;line-height:14px;letter-spacing:-0.201px;">Обработано точек</span>
<span id="t116" class="t" style="left:765.50px;top:569px;font-size:11.7px;line-height:14px;letter-spacing:-0.359px;">408</span>
<div class="ed" style="left:12px;top:603px;width:12px;height:12px;background:#fff;"></div>
<svg class="a" style="left:12px;top:603px" width="12" height="12"><path d="M3 5.5 L5 7.5 L9.2 3.2" fill="none" stroke="#000" stroke-width="1.8"/></svg>
<span id="t117" class="t" style="left:27.50px;top:601px;font-size:11.7px;line-height:14px;letter-spacing:-0.425px;">Не менять высоту</span>
<div class="a" style="left:432px;top:601px;width:96px;height:22px;background:#000"></div>
<div class="btn" style="left:433px;top:602px;width:94px;height:20px;"></div>
<span id="t118" class="t" style="left:450.60px;top:605px;font-size:11.7px;line-height:14px;letter-spacing:-0.448px;">Рассчитать</span>
<div class="btn" style="left:538px;top:601px;width:96px;height:21px;"></div>
<span id="t119" class="t" style="left:558.20px;top:605px;font-size:11.7px;line-height:14px;letter-spacing:-0.395px;">Сохранить</span>
<div class="btn" style="left:646.5px;top:601px;width:95.5px;height:21px;"></div>
<span id="t120" class="t" style="left:677.00px;top:605px;font-size:11.7px;line-height:14px;letter-spacing:-0.391px;">Выход</span>
<div class="btn" style="left:754.5px;top:600px;width:96.5px;height:22px;"></div>
<span id="t121" class="t" style="left:780.80px;top:604px;font-size:11.7px;line-height:14px;letter-spacing:-0.319px;">Помощь</span>
</body></html>
